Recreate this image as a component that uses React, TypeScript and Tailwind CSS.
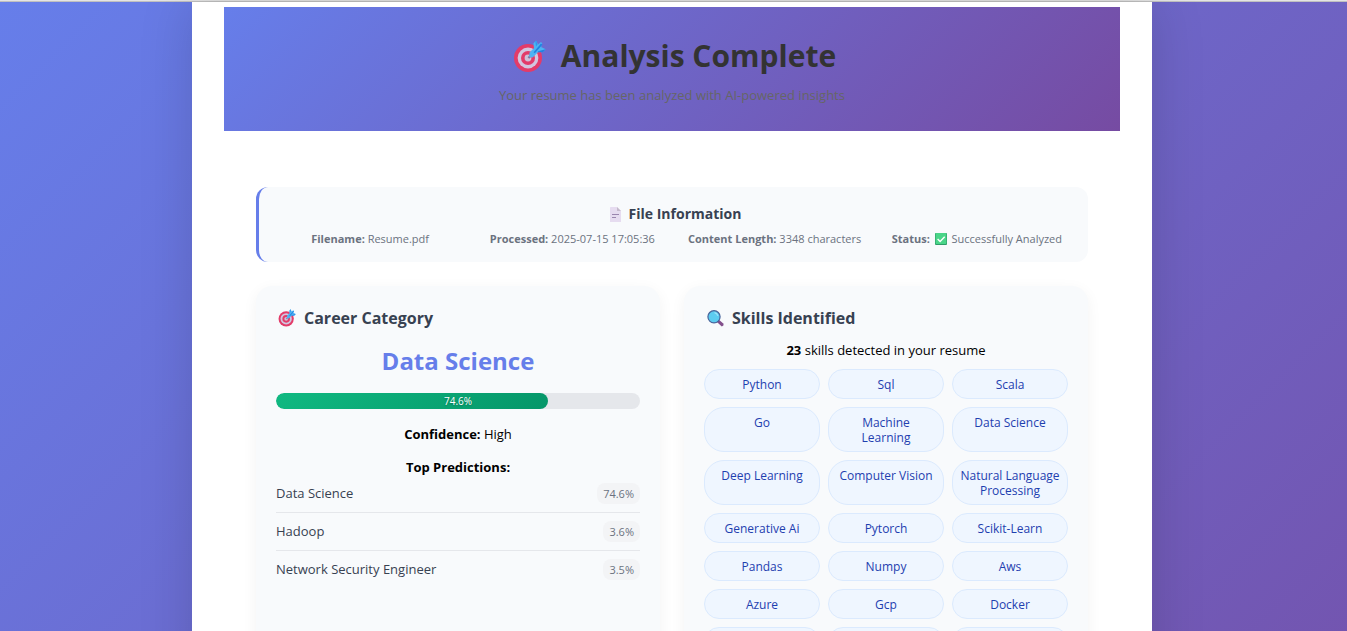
import React from "react";

const predictions = [
  { name: "Data Science", score: "74.6%" },
  { name: "Hadoop", score: "3.6%" },
  { name: "Network Security Engineer", score: "3.5%" },
];

const skills = [
  "Python", "Sql", "Scala",
  "Go", "Machine\nLearning", "Data Science",
  "Deep Learning", "Computer Vision", "Natural Language Processing",
  "Generative Ai", "Pytorch", "Scikit-Learn",
  "Pandas", "Numpy", "Aws",
  "Azure", "Gcp", "Docker",
  "", "", "",
];

function TargetIcon({ className }: { className: string }) {
  return (
    <svg viewBox="0 0 33 33" className={className} aria-hidden="true">
      <circle cx="15" cy="18" r="14" fill="#e33b69" />
      <circle cx="15" cy="18" r="10.4" fill="#d2c6df" />
      <circle cx="15" cy="18" r="7" fill="#e33b69" />
      <circle cx="15" cy="18" r="3.4" fill="#cfc0d8" />
      <path d="M14.6 17.2l2.6-2.6 1.6 1.6-2.6 2.6z" fill="#85789f" />
      <path d="M16.5 12.5L21 8l-.6-4.6L23 .5l2 4 3-2.4 1.3 1.4-1.2 3.4 4.6 2.4-3 2.6-4.7.4-5.4 5.2-3.4-.6z" fill="#4db3f3" />
      <path d="M20.6 12.2l7.4-8.6 1.4 1.2-7.6 8.4z" fill="#2281e0" />
      <path d="M25 11.3l7.7-2-2.6 2.6-4.9.4z" fill="#2281e0" />
      <path d="M22.4 1.6l.8-1 1.2 4-1.4 1.9z" fill="#2e97ec" />
    </svg>
  );
}

function PageIcon() {
  return (
    <svg viewBox="0 0 11 15" className="ml-1 h-[15px] w-[11px]" aria-hidden="true">
      <path d="M0 .6Q0 0 .6 0H7l4 4v10.4q0 .6-.6.6H.6Q0 15 0 14.4z" fill="#e6dcf0" />
      <path d="M7 0l4 4H7.6Q7 4 7 3.4z" fill="#c5bacb" />
      <path d="M2 7.5h7M2 10.5h4" stroke="#9a86ae" strokeWidth="1" />
    </svg>
  );
}

function SearchIcon() {
  return (
    <svg viewBox="0 0 17 17" className="ml-[3px] h-[17px] w-[17px]" aria-hidden="true">
      <path d="M9.6 11.8l2-2.2 5 4.1q.4 2-1.8 2.8z" fill="#83508c" />
      <circle cx="7" cy="6.8" r="6.1" fill="#5ccbf0" stroke="#47639a" strokeWidth="1.2" />
      <path d="M7.5 2.6q2.7.5 3.4 3.2" stroke="#9be3fa" strokeWidth="1.3" fill="none" />
    </svg>
  );
}

function CheckIcon() {
  return (
    <svg viewBox="0 0 12 12" className="mx-0.5 inline-block h-3 w-3 align-[-2px]" aria-hidden="true">
      <rect width="12" height="12" rx="1" fill="#2f9c68" />
      <rect x=".6" width="10.8" height="11" rx=".8" fill="#4ad588" />
      <path d="M2.6 6l2.5 2.4 4.6-4.6" stroke="#fff" strokeWidth="1.4" fill="none" />
    </svg>
  );
}

function Info({ label, children }: { label: string; children: React.ReactNode }) {
  return (
    <p className="whitespace-nowrap text-center">
      <strong className="font-bold">{label}</strong> {children}
    </p>
  );
}

const cardClass = "min-w-0 flex-1 rounded-2xl bg-[#f8fafc] p-5 shadow-[0_4px_15px_rgba(0,0,0,0.05)]";

export default function App() {
  return (
    <div className="flex h-screen flex-col overflow-hidden bg-[linear-gradient(135deg,#667eea_0%,#764ba2_125%)] font-['Open_Sans','Noto_Sans',sans-serif] text-[13px] text-black">
      <div className="h-0.5 shrink-0 border-b border-[#c0c0c0] bg-[#e4e4e4]" />
      <div className="min-h-0 flex-1 pr-[3px]">
        <main className="mx-auto min-h-full max-w-[960px] bg-white px-8 pt-[5px] shadow-[0_0_50px_rgba(0,0,0,0.15)]">
          <header className="flex flex-col items-center bg-[linear-gradient(135deg,#667eea_0%,#764ba2_100%)] py-6 text-center">
            <h1 className="flex items-center gap-[15px] text-[30px] leading-[50px] font-bold text-[#333]">
              <TargetIcon className="ml-[5px] h-[33px] w-[33px]" />
              Analysis Complete
            </h1>
            <p className="pt-1 pb-0.5 text-[13px] leading-5 text-[#666]">
              Your resume has been analyzed with AI-powered insights
            </p>
          </header>

          <div className="px-8 pt-14">
            <section className="rounded-xl border-l-[3px] border-[#667eea] bg-[#f8fafc] px-4 pt-4 pb-[15px]">
              <h2 className="mb-1.5 flex items-center justify-center gap-2 text-[14px] leading-[22px] font-bold text-[#374151]">
                <PageIcon />
                File Information
              </h2>
              <div className="grid grid-cols-4 gap-3 text-[11px] leading-4 text-[#6b7280]">
                <Info label="Filename:">Resume.pdf</Info>
                <Info label="Processed:">2025-07-15 17:05:36</Info>
                <Info label="Content Length:">3348 characters</Info>
                <Info label="Status:"><CheckIcon /> Successfully Analyzed</Info>
              </div>
            </section>

            <div className="mt-6 flex gap-6">
              <section className={cardClass + " min-h-[400px]"}>
                <h2 className="flex items-center gap-2 text-[16px] leading-6 font-bold text-[#374151]">
                  <TargetIcon className="ml-[2px] h-[18px] w-[18px]" />
                  Career Category
                </h2>
                <p className="pt-[13px] text-center text-[24px] leading-[36px] font-bold text-[#667eea]">Data Science</p>
                <div className="relative mt-[14px] h-4 overflow-hidden rounded-full bg-[#e5e7eb]">
                  <div className="h-full w-[74.6%] rounded-full bg-[linear-gradient(135deg,#10b981,#059669)]" />
                  <span className="absolute inset-0 text-center text-[10px] leading-4 text-white [text-shadow:0_1px_2px_rgba(0,0,0,0.3)]">
                    74.6%
                  </span>
                </div>
                <p className="mt-[15px] text-center leading-5"><strong>Confidence:</strong> High</p>
                <p className="mt-[13px] text-center leading-5 font-bold">Top Predictions:</p>
                <ul className="-mt-0.5">
                  {predictions.map((p) => (
                    <li key={p.name} className="flex items-center justify-between border-b border-[#e5e7eb] py-2 last:border-b-0">
                      <span className="text-[#374151]">{p.name}</span>
                      <span className="rounded-lg bg-[#f3f4f6] px-1.5 text-[11px] leading-[21px] text-[#6b7280]">{p.score}</span>
                    </li>
                  ))}
                </ul>
              </section>

              <section className={cardClass}>
                <h2 className="flex items-center gap-2 text-[16px] leading-6 font-bold text-[#374151]">
                  <SearchIcon />
                  Skills Identified
                </h2>
                <p className="mt-[10px] text-center leading-5"><strong>23</strong> skills detected in your resume</p>
                <ul className="mt-[9px] grid grid-cols-3 gap-2">
                  {skills.map((s, i) => (
                    <li
                      key={i}
                      className="min-h-[30px] rounded-[20px] border border-[#dbeafe] bg-[#eff6ff] px-[7px] pt-[7px] pb-1.5 text-center text-[12px] leading-[15px] whitespace-pre-line text-[#1e40af]"
                    >
                      {s}
                    </li>
                  ))}
                </ul>
              </section>
            </div>
          </div>
        </main>
      </div>
    </div>
  );
}
